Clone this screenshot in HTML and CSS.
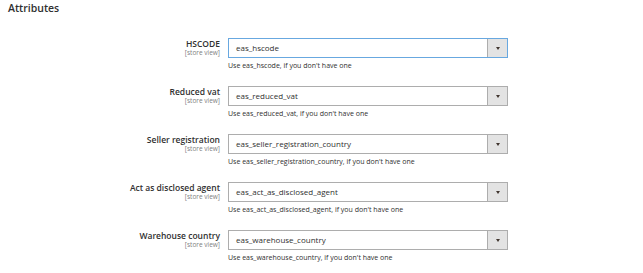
FILE: index.html
```html
<!DOCTYPE html>
<html>
<head>
<meta charset="utf-8">
<link rel="stylesheet" href="styles.css">
</head>
<body>
<div class="section">
  <h2 class="title">Attributes</h2>
  <div class="fields">
    <div class="row">
      <div class="label"><span class="name">HSCODE</span><span class="scope">[store view]</span></div>
      <div class="control">
        <div class="select focus"><span class="value">eas_hscode</span><span class="btn"><span class="arrow"></span></span></div>
        <div class="note">Use eas_hscode, if you don't have one</div>
      </div>
    </div>
    <div class="row">
      <div class="label"><span class="name">Reduced vat</span><span class="scope">[store view]</span></div>
      <div class="control">
        <div class="select"><span class="value">eas_reduced_vat</span><span class="btn"><span class="arrow"></span></span></div>
        <div class="note">Use eas_reduced_vat, if you don't have one</div>
      </div>
    </div>
    <div class="row">
      <div class="label"><span class="name">Seller registration</span><span class="scope">[store view]</span></div>
      <div class="control">
        <div class="select"><span class="value">eas_seller_registration_country</span><span class="btn"><span class="arrow"></span></span></div>
        <div class="note">Use eas_seller_registration_country, if you don't have one</div>
      </div>
    </div>
    <div class="row">
      <div class="label"><span class="name">Act as disclosed agent</span><span class="scope">[store view]</span></div>
      <div class="control">
        <div class="select"><span class="value">eas_act_as_disclosed_agent</span><span class="btn"><span class="arrow"></span></span></div>
        <div class="note">Use eas_act_as_disclosed_agent, if you don't have one</div>
      </div>
    </div>
    <div class="row">
      <div class="label"><span class="name">Warehouse country</span><span class="scope">[store view]</span></div>
      <div class="control">
        <div class="select"><span class="value">eas_warehouse_country</span><span class="btn"><span class="arrow"></span></span></div>
        <div class="note">Use eas_warehouse_country, if you don't have one</div>
      </div>
    </div>
  </div>
</div>
</body>
</html>
```
FILE: styles.css
```css
html, body {
  margin: 0;
  padding: 0;
  background: #ffffff;
}
body {
  font-family: "Open Sans", "Liberation Sans", sans-serif;
  color: #303030;
}
.section {
  padding: 0 0 0 8px;
}
.title {
  margin: 0;
  padding-top: 1px;
  font-size: 10.5px;
  line-height: 15px;
  font-weight: 600;
  color: #303030;
}
.fields {
  display: flex;
  flex-direction: column;
  gap: 9px;
  padding-top: 22px;
}
.row {
  display: grid;
  grid-template-columns: 212px 280px;
  column-gap: 8px;
  align-items: start;
  height: 39px;
}
.label {
  display: flex;
  flex-direction: column;
  align-items: flex-end;
  padding-top: 1px;
}
.name {
  font-size: 8.5px;
  line-height: 10px;
  font-weight: 600;
  color: #303030;
}
.scope {
  font-size: 6.5px;
  line-height: 8px;
  color: #808080;
}
.control {
  display: flex;
  flex-direction: column;
}
.select {
  display: flex;
  height: 20px;
  box-sizing: border-box;
  border: 1px solid #adadad;
  background: #fff;
}
.select.focus {
  border-color: #68a8e0;
}
.value {
  flex: 1;
  padding-left: 7px;
  font-size: 8px;
  line-height: 18px;
  color: #303030;
}
.btn {
  width: 19px;
  background: #e3e3e3;
  border-left: 1px solid #adadad;
  display: flex;
  align-items: center;
  justify-content: center;
}
.arrow {
  width: 0;
  height: 0;
  border-left: 2.5px solid transparent;
  border-right: 2.5px solid transparent;
  border-top: 3px solid #41362f;
}
.note {
  margin-top: 3px;
  font-size: 7px;
  line-height: 10px;
  color: #303030;
}
```
